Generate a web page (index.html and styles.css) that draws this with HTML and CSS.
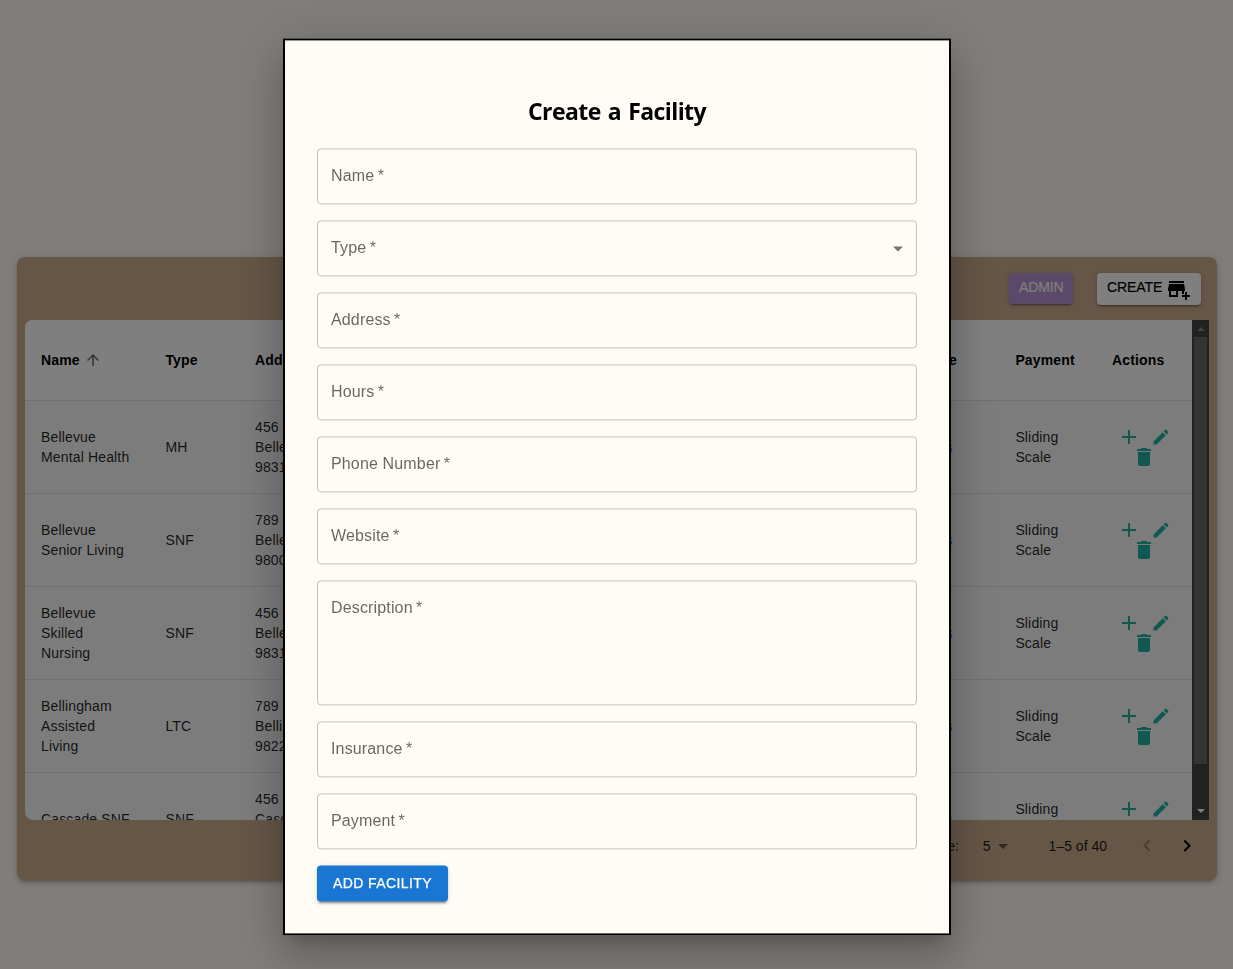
FILE: index.html
```html
<!DOCTYPE html>
<html lang="en">
<head>
<meta charset="utf-8">
<title>Facilities</title>
<link rel="stylesheet" href="styles.css">
</head>
<body>
<svg class="defs" aria-hidden="true">
  <symbol id="add" viewBox="0 0 24 24"><path d="M19 13h-6v6h-2v-6H5v-2h6V5h2v6h6v2z"/></symbol>
  <symbol id="edit" viewBox="0 0 24 24"><path d="M3 17.25V21h3.75L17.81 9.94l-3.75-3.75L3 17.25zM20.71 7.04c.39-.39.39-1.02 0-1.41l-2.34-2.34a.9959.9959 0 0 0-1.41 0l-1.83 1.83 3.75 3.75 1.83-1.83z"/></symbol>
  <symbol id="delete" viewBox="0 0 24 24"><path d="M6 19c0 1.1.9 2 2 2h8c1.1 0 2-.9 2-2V7H6v12zM19 4h-3.5l-1-1h-5l-1 1H5v2h14V4z"/></symbol>
</svg>
<main class="page">
  <section class="card">
    <header class="toolbar">
      <button class="btn admin">Admin</button>
      <button class="btn create">Create
        <svg class="store" viewBox="0 0 24 24"><path d="M15 17h2v-3h1v-2l-1-5H2l-1 5v2h1v6h9v-6h4v3zm-6 1H4v-4h5v4zM2 4h15v2H2z"/><path d="M20 18v-3h-2v3h-3v2h3v3h2v-3h3v-2z"/></svg>
      </button>
    </header>
    <div class="table-wrap">
      <div class="table">
        <div class="row head"><span>Name <svg class="arrow" viewBox="0 0 24 24"><path d="m4 12 1.41 1.41L11 7.83V20h2V7.83l5.58 5.59L20 12l-8-8-8 8z"/></svg></span><span>Type</span><span>Address</span><span class="site">Website</span><span>Payment</span><span>Actions</span></div>
        <div class="row"><span>Bellevue<br>Mental Health</span><span>MH</span><span>456 Main<br>Bellevue<br>98311</span><span class="site link">Details</span><span>Sliding<br>Scale</span><span class="actions"><svg><use href="#add"/></svg><svg class="pen"><use href="#edit"/></svg><svg><use href="#delete"/></svg></span></div>
        <div class="row"><span>Bellevue<br>Senior Living</span><span>SNF</span><span>789 Main<br>Bellevue<br>98004</span><span class="site link">Details</span><span>Sliding<br>Scale</span><span class="actions"><svg><use href="#add"/></svg><svg class="pen"><use href="#edit"/></svg><svg><use href="#delete"/></svg></span></div>
        <div class="row"><span>Bellevue<br>Skilled<br>Nursing</span><span>SNF</span><span>456 Main<br>Bellevue<br>98311</span><span class="site link">Details</span><span>Sliding<br>Scale</span><span class="actions"><svg><use href="#add"/></svg><svg class="pen"><use href="#edit"/></svg><svg><use href="#delete"/></svg></span></div>
        <div class="row"><span>Bellingham<br>Assisted<br>Living</span><span>LTC</span><span>789 Main<br>Bellingham<br>98225</span><span class="site link">Details</span><span>Sliding<br>Scale</span><span class="actions"><svg><use href="#add"/></svg><svg class="pen"><use href="#edit"/></svg><svg><use href="#delete"/></svg></span></div>
        <div class="row"><span>Cascade SNF</span><span>SNF</span><span>456 Main<br>Cascade<br>98225</span><span class="site link">Details</span><span>Sliding<br>Scale</span><span class="actions"><svg><use href="#add"/></svg><svg class="pen"><use href="#edit"/></svg><svg><use href="#delete"/></svg></span></div>
      </div>
      <div class="scrollbar">
        <i class="up"></i>
        <div class="thumb"></div>
        <i class="down"></i>
      </div>
    </div>
    <footer class="pager">
      <span>Rows per page:</span>
      <span class="size">5<svg viewBox="0 0 24 24"><path d="m7 10 5 5 5-5z"/></svg></span>
      <span class="range">1–5 of 40</span>
      <svg class="nav off" viewBox="0 0 24 24"><path d="M15.41 16.09l-4.58-4.59 4.58-4.59L14 5.5l-6 6 6 6z"/></svg>
      <svg class="nav" viewBox="0 0 24 24"><path d="M8.59 16.34l4.58-4.59-4.58-4.59L10 5.75l6 6-6 6z"/></svg>
    </footer>
  </section>
</main>
<div class="overlay">
  <form class="modal">
    <h2>Create a Facility</h2>
    <div class="field">Name&thinsp;*</div>
    <div class="field">Type&thinsp;*<svg viewBox="0 0 24 24"><path d="m7 10 5 5 5-5z"/></svg></div>
    <div class="field">Address&thinsp;*</div>
    <div class="field">Hours&thinsp;*</div>
    <div class="field">Phone Number&thinsp;*</div>
    <div class="field">Website&thinsp;*</div>
    <div class="field tall">Description&thinsp;*</div>
    <div class="field">Insurance&thinsp;*</div>
    <div class="field">Payment&thinsp;*</div>
    <button class="submit" type="button">Add Facility</button>
  </form>
</div>
</body>
</html>
```
FILE: styles.css
```css
* { box-sizing: border-box; }
body {
  margin: 0;
  height: 969px;
  overflow: hidden;
  background: #fffcf5;
  font-family: "Liberation Sans", Arial, sans-serif;
}
.defs { display: none; }
svg { fill: currentColor; flex: none; }
.page { padding: 257px 16px 0 17px; }
.card {
  height: 623px;
  padding: 0 8px;
  border-radius: 8px;
  background: #ccac8c;
  box-shadow: 0 3px 3px -2px rgba(0,0,0,.2), 0 3px 4px rgba(0,0,0,.14), 0 1px 8px rgba(0,0,0,.12);
}
.toolbar {
  display: flex;
  justify-content: flex-end;
  align-items: flex-start;
  gap: 24px;
  height: 63px;
  padding: 16px 8px 0 0;
}
.btn {
  display: flex;
  align-items: center;
  border: 0;
  border-radius: 4px;
  font: 500 14px/20px "Liberation Sans", Arial, sans-serif;
  letter-spacing: -.1px;
  text-transform: uppercase;
  -webkit-text-stroke: .2px currentColor;
  box-shadow: 0 3px 1px -2px rgba(0,0,0,.2), 0 2px 2px rgba(0,0,0,.14), 0 1px 5px rgba(0,0,0,.12);
}
.admin { width: 64px; height: 31px; padding: 0 0 4px 10px; background: #b493d0; color: #fffcf5; }
.create { width: 104px; height: 32px; padding: 0 10px 5px; background: #fff; color: #000; }
.store { width: 24px; height: 24px; margin: 5px 0 0 5px; stroke: none; }
.table-wrap {
  display: flex;
  height: 500px;
  overflow: hidden;
  border-radius: 8px 0 0 8px;
}
.table { flex: 1; background: #f8f8f8; }
.row {
  display: grid;
  grid-template-columns: 124.4px 89.6px 584px 176.4px 96.6px 96px;
  align-items: center;
  height: 93px;
  border-bottom: 1px solid #e0e0e0;
  color: rgba(0,0,0,.87);
  font-size: 14px;
  line-height: 20px;
  letter-spacing: .15px;
}
.row > span { padding-left: 16px; }
.head { height: 81px; background: #fff; color: #000; font-weight: 700; }
.head > span { display: flex; align-items: center; }
.arrow { width: 18px; height: 18px; margin-left: 4px; opacity: .6; }
.row > .site { justify-self: end; padding-right: 42.4px; }
.row > .link { padding-right: 47px; color: #1e6f9a; }
.row > .actions {
  display: flex;
  flex-wrap: wrap;
  justify-content: center;
  width: 96px;
  padding: 0 16px;
  column-gap: 10px;
  color: #20b2a0;
}
.actions svg { width: 24px; height: 24px; margin: -2px 0; }
.actions .pen { width: 20px; height: 20px; margin: 0; }
.scrollbar {
  display: flex;
  flex-direction: column;
  align-items: center;
  width: 17px;
  background: #424242;
}
.thumb { width: 13px; height: 427px; margin: 6px 0 45px; background: #686868; }
.up, .down { width: 0; height: 0; border: 4px solid transparent; }
.up { margin-top: 7px; border-bottom-color: #888; border-top: 0; }
.down { border-top-color: #fff; border-bottom: 0; }
.up, .down, .thumb { flex: none; }
.pager {
  display: flex;
  justify-content: flex-end;
  align-items: center;
  height: 52px;
  padding-right: 10px;
  color: rgba(0,0,0,.87);
  font-size: 14px;
}
.size { display: flex; align-items: center; margin-left: 24px; }
.size svg { width: 24px; height: 24px; opacity: .6; }
.range { margin: 0 28px 0 34px; }
.nav { width: 24px; height: 24px; margin-right: 16px; color: #000; }
.nav:last-child { margin-right: 0; }
.off { opacity: .26; }
.overlay {
  position: fixed;
  inset: 0;
  display: flex;
  justify-content: center;
  align-items: flex-start;
  padding: 38px 0 0 1px;
  background: rgba(0,0,0,.5);
}
.modal {
  width: 668px;
  height: 897px;
  padding: 32px;
  border: 2px solid #000;
  background: #fffcf5;
  box-shadow: 0 11px 15px -7px rgba(0,0,0,.2), 0 24px 38px 3px rgba(0,0,0,.14), 0 9px 46px 8px rgba(0,0,0,.12);
  transform: translateY(.4px);
}
h2 {
  height: 76px;
  margin: 0;
  padding-top: 23px;
  font: 700 23px/32px "Open Sans", "Noto Sans", sans-serif;
  letter-spacing: -.6px;
  word-spacing: 1.8px;
  text-align: center;
}
.field {
  display: flex;
  align-items: flex-start;
  justify-content: space-between;
  height: 56px;
  margin-bottom: 16px;
  padding: 15px 6px 0 13px;
  border: 1px solid rgba(0,0,0,.23);
  border-radius: 4px;
  color: rgba(0,0,0,.6);
  font-size: 16px;
  line-height: 23px;
  letter-spacing: .15px;
}
.field svg { width: 24px; height: 24px; color: rgba(0,0,0,.54); }
.tall { height: 125px; }
.submit {
  display: block;
  width: 131px;
  height: 36px;
  padding: 0;
  border: 0;
  border-radius: 4px;
  background: #1976d2;
  color: #fff;
  font: 500 14px/24px "Liberation Sans", Arial, sans-serif;
  letter-spacing: .4px;
  text-transform: uppercase;
  -webkit-text-stroke: .25px currentColor;
  box-shadow: 0 3px 1px -2px rgba(0,0,0,.2), 0 2px 2px rgba(0,0,0,.14), 0 1px 5px rgba(0,0,0,.12);
}
```
